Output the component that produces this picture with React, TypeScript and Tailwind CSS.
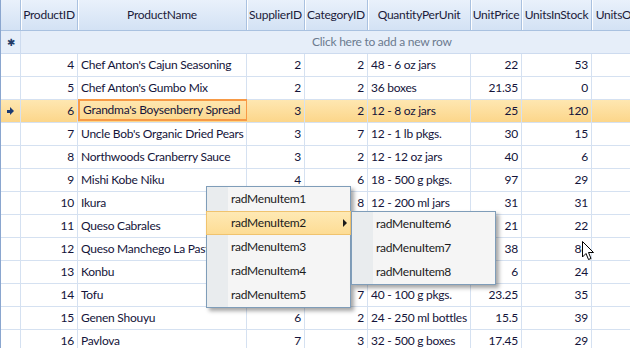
type Product = {
  id: number
  name: string
  supplier: number
  category: number
  qty: string
  price: string
  stock: number
}

const PRODUCTS: Product[] = [
  { id: 4, name: "Chef Anton's Cajun Seasoning", supplier: 2, category: 2, qty: '48 - 6 oz jars', price: '22', stock: 53 },
  { id: 5, name: "Chef Anton's Gumbo Mix", supplier: 2, category: 2, qty: '36 boxes', price: '21.35', stock: 0 },
  { id: 6, name: "Grandma's Boysenberry Spread", supplier: 3, category: 2, qty: '12 - 8 oz jars', price: '25', stock: 120 },
  { id: 7, name: "Uncle Bob's Organic Dried Pears", supplier: 3, category: 7, qty: '12 - 1 lb pkgs.', price: '30', stock: 15 },
  { id: 8, name: 'Northwoods Cranberry Sauce', supplier: 3, category: 2, qty: '12 - 12 oz jars', price: '40', stock: 6 },
  { id: 9, name: 'Mishi Kobe Niku', supplier: 4, category: 6, qty: '18 - 500 g pkgs.', price: '97', stock: 29 },
  { id: 10, name: 'Ikura', supplier: 4, category: 8, qty: '12 - 200 ml jars', price: '31', stock: 31 },
  { id: 11, name: 'Queso Cabrales', supplier: 5, category: 4, qty: '1 kg pkg.', price: '21', stock: 22 },
  { id: 12, name: 'Queso Manchego La Pastora', supplier: 5, category: 4, qty: '10 - 500 g pkgs.', price: '38', stock: 86 },
  { id: 13, name: 'Konbu', supplier: 6, category: 8, qty: '2 kg box', price: '6', stock: 24 },
  { id: 14, name: 'Tofu', supplier: 6, category: 7, qty: '40 - 100 g pkgs.', price: '23.25', stock: 35 },
  { id: 15, name: 'Genen Shouyu', supplier: 6, category: 2, qty: '24 - 250 ml bottles', price: '15.5', stock: 39 },
  { id: 16, name: 'Pavlova', supplier: 7, category: 3, qty: '32 - 500 g boxes', price: '17.45', stock: 29 },
]

const HEADERS = [
  { label: 'ProductID', w: 'w-[57px]' },
  { label: 'ProductName', w: 'w-[169px]' },
  { label: 'SupplierID', w: 'w-[58px]' },
  { label: 'CategoryID', w: 'w-[63px]' },
  { label: 'QuantityPerUnit', w: 'w-[103px]' },
  { label: 'UnitPrice', w: 'w-[51px]' },
  { label: 'UnitsInStock', w: 'w-[70px]' },
  { label: 'UnitsOnOrder', w: 'w-[80px]' },
]

const cell = 'h-full shrink-0 border-r border-[#d5e1f1] px-[3px] flex items-center overflow-hidden whitespace-nowrap'

function MenuItem({ label, active, arrow }: { label: string; active?: boolean; arrow?: boolean }) {
  return (
    <div
      className={`relative h-[24px] flex items-center pl-[24px] pr-2 ${
        active ? 'bg-gradient-to-b from-[#fee9b4] to-[#fddc94] border border-[#f0c36e] -mx-px' : ''
      }`}
    >
      <span>{label}</span>
      {arrow && (
        <span className="absolute right-[3px] top-1/2 -translate-y-1/2 w-0 h-0 border-y-[4px] border-y-transparent border-l-[4px] border-l-[#1a1a1a]" />
      )}
    </div>
  )
}

function Menu({ items, className }: { items: { label: string; active?: boolean; arrow?: boolean }[]; className: string }) {
  return (
    <div
      className={`absolute w-[145px] border border-[#7f9db9] bg-[#f5f5f5] shadow-[3px_3px_4px_rgba(0,0,0,0.35)] text-[#1b1b1b] ${className}`}
    >
      <div className="absolute left-0 top-0 bottom-0 w-[21px] bg-[#e9ecee]" />
      <div className="relative">
        {items.map((it) => (
          <MenuItem key={it.label} {...it} />
        ))}
      </div>
    </div>
  )
}

export default function App() {
  return (
    <div
      className="relative w-[630px] h-[348px] overflow-hidden bg-white text-[12px] tracking-[-0.25px] text-[#14143a] border-l border-[#8aa6cf]"
      style={{ fontFamily: 'Lato, "Noto Sans", sans-serif' }}
    >
      {/* Header */}
      <div className="flex h-[31px] bg-gradient-to-b from-[#e9f1fb] to-[#d3e2f4] border-b border-[#a9c1e0] text-[#1b1b3a]">
        <div className="w-[20px] h-full shrink-0 border-r border-[#a9c1e0]" />
        {HEADERS.map((h) => (
          <div
            key={h.label}
            className={`${h.w} h-full shrink-0 border-r border-[#a9c1e0] shadow-[inset_1px_0_0_#ffffff] flex items-center justify-center whitespace-nowrap overflow-hidden`}
          >
            {h.label}
          </div>
        ))}
      </div>

      {/* New row */}
      <div className="flex h-[23px] bg-[#e6eef9] border-b border-[#cddbef]">
        <div className="w-[20px] h-full shrink-0 border-r border-[#cddbef] flex items-center justify-center text-[#223a66] text-[10px]">
          ✱
        </div>
        <div className="flex-1 flex items-center pl-[291px] text-[#6b7a8f]">Click here to add a new row</div>
      </div>

      {/* Rows */}
      {PRODUCTS.map((p) => {
        const selected = p.id === 6
        return (
          <div
            key={p.id}
            className={`flex h-[23px] border-b border-[#d5e1f1] ${
              selected ? 'bg-gradient-to-b from-[#fee7b1] to-[#fcd68a]' : ''
            }`}
          >
            <div className="w-[20px] h-full shrink-0 border-r border-[#d5e1f1] flex items-center justify-center">
              {selected && (
                <span className="flex items-center">
                  <span className="w-[3px] h-[3px] bg-[#1d3b73]" />
                  <span className="w-0 h-0 border-y-[4px] border-y-transparent border-l-[4px] border-l-[#1d3b73]" />
                </span>
              )}
            </div>
            <div className={`${cell} w-[57px] justify-end`}>{p.id}</div>
            <div
              className={`${cell} w-[169px] ${selected ? 'border-2 border-[#f79a46] -my-px h-[24px]' : ''}`}
            >
              {p.name}
            </div>
            <div className={`${cell} w-[58px] justify-end`}>{p.supplier}</div>
            <div className={`${cell} w-[63px] justify-end`}>{p.category}</div>
            <div className={`${cell} w-[103px]`}>{p.qty}</div>
            <div className={`${cell} w-[51px] justify-end`}>{p.price}</div>
            <div className={`${cell} w-[70px] justify-end`}>{p.stock}</div>
            <div className={`${cell} w-[80px]`} />
          </div>
        )
      })}

      {/* Context menu */}
      <Menu
        className="left-[205px] top-[186px]"
        items={[
          { label: 'radMenuItem1' },
          { label: 'radMenuItem2', active: true, arrow: true },
          { label: 'radMenuItem3' },
          { label: 'radMenuItem4' },
          { label: 'radMenuItem5' },
        ]}
      />
      <Menu
        className="left-[350px] top-[211px]"
        items={[{ label: 'radMenuItem6' }, { label: 'radMenuItem7' }, { label: 'radMenuItem8' }]}
      />

      {/* Mouse cursor */}
      <svg className="absolute left-[581px] top-[241px]" width="13" height="20" viewBox="0 0 13 20">
        <path d="M0.5 0.5 L0.5 16 L4 12.5 L6.5 18.5 L9 17.5 L6.5 11.5 L11.5 11.5 Z" fill="#fff" stroke="#000" strokeWidth="1" />
      </svg>
    </div>
  )
}
